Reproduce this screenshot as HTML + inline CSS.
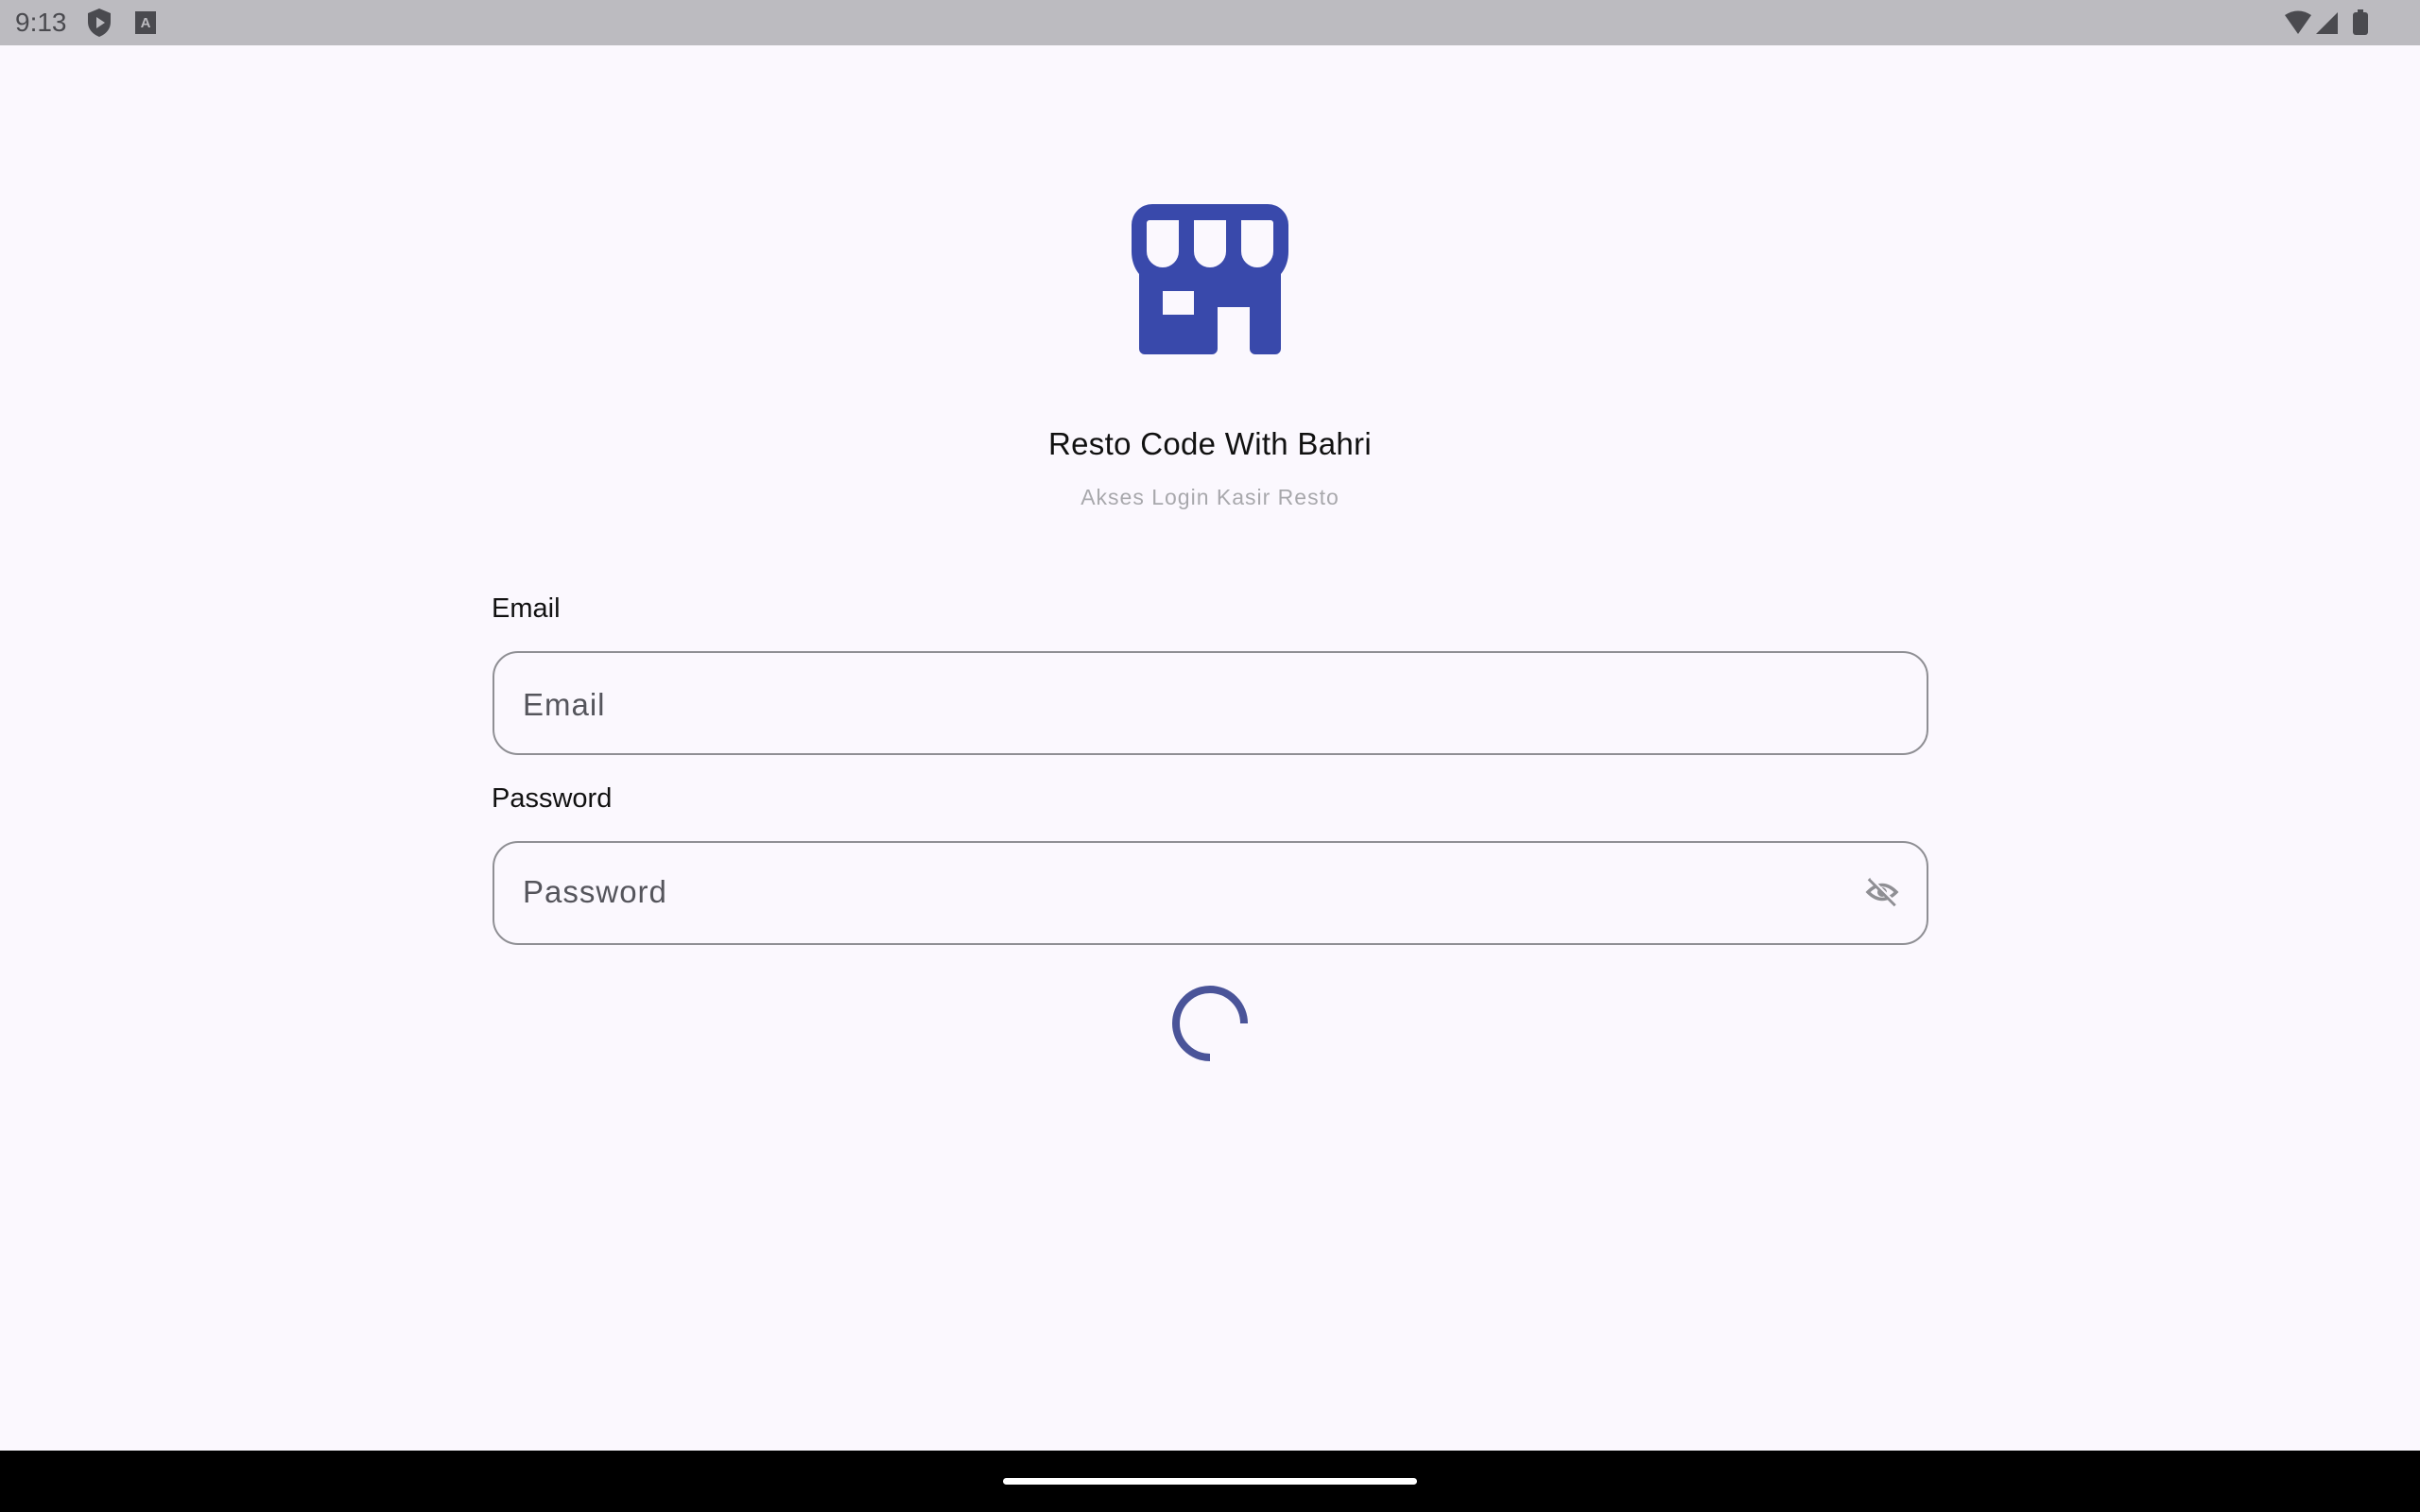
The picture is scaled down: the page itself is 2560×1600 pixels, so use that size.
<!DOCTYPE html>
<html><head><meta charset="utf-8"><style>
*{margin:0;padding:0;box-sizing:border-box}
body{width:2560px;height:1600px;background:#fbf8fe;position:relative;overflow:hidden;font-family:"Liberation Sans",sans-serif}
.a{position:absolute;white-space:nowrap}
.sb{position:absolute;left:0;top:0;width:2560px;height:48px;background:#bcbbc0}
.nav{position:absolute;left:0;top:1535px;width:2560px;height:65px;background:#000}
.pill{position:absolute;left:1061px;top:1564px;width:438px;height:7px;border-radius:4px;background:#fff}
.inp{position:absolute;left:521px;width:1519px;height:110px;border:2px solid #8f8f94;border-radius:27px}
.lab{font-size:29px;line-height:29px;color:#111}
.ph{font-size:33px;line-height:33px;color:#55555c;letter-spacing:1px}
</style></head><body>
<div class="sb"></div>
<div class="a" style="left:16px;top:10px;font-size:28px;line-height:28px;color:#4a4a4f">9:13</div>
<svg class="a" style="left:90px;top:8px" width="30" height="32" viewBox="0 0 30 32"><path d="M15 1L3 6v9c0 8 5 13 12 16 7-3 12-8 12-16V6z" fill="#4a4a4f"/><path d="M12 10v12l9-6z" fill="#bcbbc0"/></svg>
<svg class="a" style="left:143px;top:12px" width="22" height="24"><rect width="22" height="24" fill="#4a4a4f"/><text x="11" y="17" font-size="15" font-weight="bold" text-anchor="middle" fill="#bcbbc0" font-family="Liberation Sans">A</text></svg>
<svg class="a" style="left:0;top:0" width="2560" height="48"><path d="M2417 16Q2431 7 2445 16L2431 36z" fill="#4a4a4f"/><path d="M2450 36L2473 13V36z" fill="#4a4a4f"/><rect x="2489" y="13" width="16" height="24" rx="3" fill="#4a4a4f"/><rect x="2494" y="10" width="6" height="4" fill="#4a4a4f"/></svg>
<svg class="a" style="left:0;top:0" width="2560" height="1600">
<path fill="#3949ab" fill-rule="evenodd" d="M1219 216H1341A22 22 0 0 1 1363 238V266Q1363 280 1355 290V369A6 6 0 0 1 1349 375H1328A6 6 0 0 1 1322 369V325H1288V369A6 6 0 0 1 1282 375H1211A6 6 0 0 1 1205 369V290Q1197 280 1197 266V238A22 22 0 0 1 1219 216Z
M1213 236A3 3 0 0 1 1216 233H1247V266A17 17 0 0 1 1213 266Z
M1263 233H1297V266A17 17 0 0 1 1263 266Z
M1313 233H1344A3 3 0 0 1 1347 236V266A17 17 0 0 1 1313 266Z
M1230 308H1263V333H1230Z"/>
<path d="M1316 1083A36 36 0 1 0 1280 1119" fill="none" stroke="#4a5499" stroke-width="8"/>
</svg>
<div class="a" style="left:0;width:2560px;text-align:center;top:453px;font-size:33px;line-height:33px;color:#111;letter-spacing:0.3px">Resto Code With Bahri</div>
<div class="a" style="left:0;width:2560px;text-align:center;top:515px;font-size:23px;line-height:23px;color:#a8a8ac;letter-spacing:1px">Akses Login Kasir Resto</div>
<div class="a lab" style="left:520px;top:630px">Email</div>
<div class="inp" style="top:689px"></div>
<div class="a ph" style="left:553px;top:729px">Email</div>
<div class="a lab" style="left:520px;top:831px">Password</div>
<div class="inp" style="top:890px"></div>
<div class="a ph" style="left:553px;top:927px">Password</div>
<svg class="a" style="left:1972px;top:925px" width="38" height="38" viewBox="0 0 38 38"><path d="M4 19Q19 4 34 19Q19 34 4 19Z" fill="none" stroke="#8f8f94" stroke-width="3.5"/><circle cx="19" cy="19" r="5" fill="#8f8f94"/><path d="M5 5L33 33" stroke="#8f8f94" stroke-width="3.5"/><path d="M7 4L35 32" stroke="#fbf8fe" stroke-width="2"/></svg>
<div class="nav"></div><div class="pill"></div>
</body></html>
